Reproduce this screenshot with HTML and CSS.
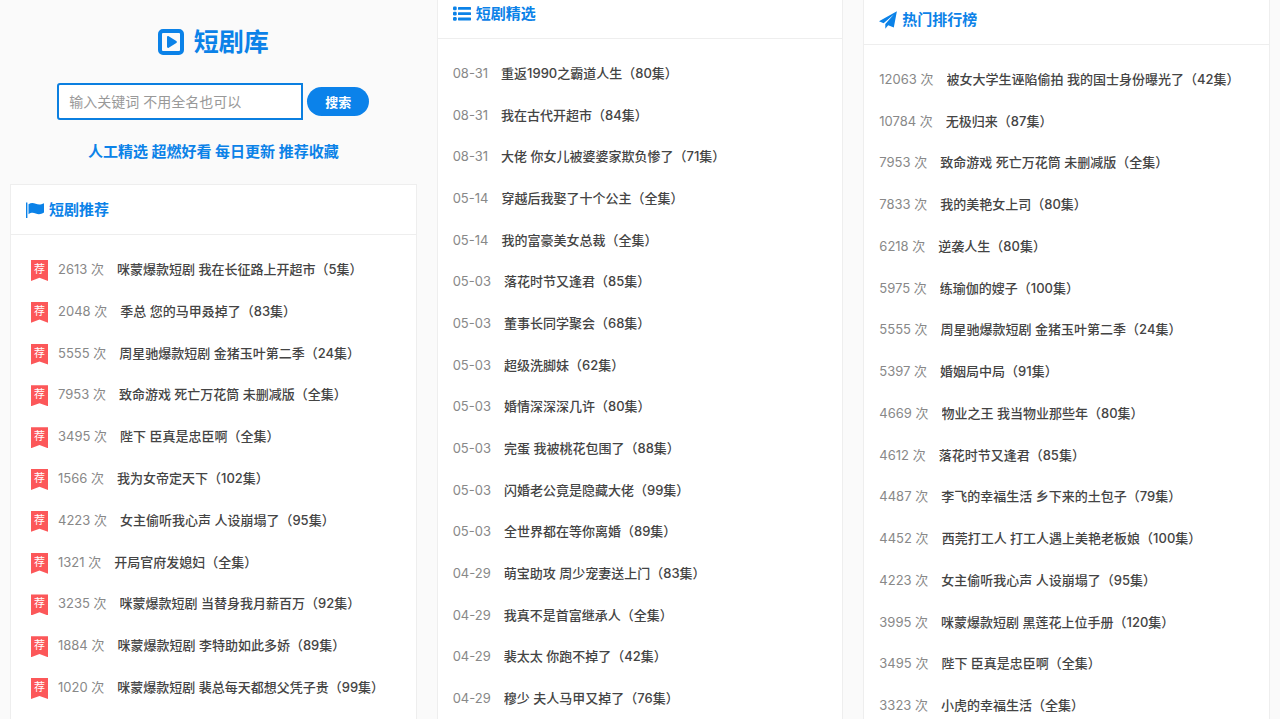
FILE: index.html
```html
<!DOCTYPE html>
<html lang="zh-CN">
<head>
<meta charset="utf-8">
<meta name="viewport" content="width=device-width, initial-scale=1">
<title>短剧库</title>
<link rel="stylesheet" href="styles.css">
</head>
<body>
<main class="columns">
  <div class="column">
    <header class="intro">
      <h1 class="brand">
        <svg class="brand-icon" viewBox="0 0 26 26" aria-hidden="true"><rect x="2" y="2" width="22" height="22" rx="3" fill="none" stroke="currentColor" stroke-width="4"/><path d="M9 8.200c0-1 .9-1.500 1.700-1l7.600 4.900c.8.500.8 1.300 0 1.800l-7.600 4.900c-.8.500-1.700 0-1.700-1z" fill="currentColor"/></svg>
        <span>短剧库</span>
      </h1>
      <form class="search">
        <input class="search-input" type="text" aria-label="搜索短剧" placeholder="输入关键词 不用全名也可以">
        <button class="search-button" type="button">搜索</button>
      </form>
      <p class="slogan">人工精选 超燃好看 每日更新 推荐收藏</p>
    </header>
    <section class="panel panel-picks">
      <h2 class="panel-title">
        <svg class="title-icon" viewBox="0 0 18 18" aria-hidden="true"><path d="M0 1.500h1.400V17H0zM2.500 3.200c2.500-1.700 4.700-1.500 7.200-.5 2.600 1 5 1.100 8.300-.5v9.300c-3 1.900-5.500 2-8.300 1-2.600-.9-4.700-1-7.200.8z" fill="currentColor"/></svg>
        <span>短剧推荐</span>
      </h2>
      <ul class="list">
        <li class="row"><span class="badge">荐</span><span class="meta">2613 次</span><a class="name" href="#">咪蒙爆款短剧 我在长征路上开超市（5集）</a></li>
        <li class="row"><span class="badge">荐</span><span class="meta">2048 次</span><a class="name" href="#">季总 您的马甲叒掉了（83集）</a></li>
        <li class="row"><span class="badge">荐</span><span class="meta">5555 次</span><a class="name" href="#">周星驰爆款短剧 金猪玉叶第二季（24集）</a></li>
        <li class="row"><span class="badge">荐</span><span class="meta">7953 次</span><a class="name" href="#">致命游戏 死亡万花筒 未删减版（全集）</a></li>
        <li class="row"><span class="badge">荐</span><span class="meta">3495 次</span><a class="name" href="#">陛下 臣真是忠臣啊（全集）</a></li>
        <li class="row"><span class="badge">荐</span><span class="meta">1566 次</span><a class="name" href="#">我为女帝定天下（102集）</a></li>
        <li class="row"><span class="badge">荐</span><span class="meta">4223 次</span><a class="name" href="#">女主偷听我心声 人设崩塌了（95集）</a></li>
        <li class="row"><span class="badge">荐</span><span class="meta">1321 次</span><a class="name" href="#">开局官府发媳妇（全集）</a></li>
        <li class="row"><span class="badge">荐</span><span class="meta">3235 次</span><a class="name" href="#">咪蒙爆款短剧 当替身我月薪百万（92集）</a></li>
        <li class="row"><span class="badge">荐</span><span class="meta">1884 次</span><a class="name" href="#">咪蒙爆款短剧 李特助如此多娇（89集）</a></li>
        <li class="row"><span class="badge">荐</span><span class="meta">1020 次</span><a class="name" href="#">咪蒙爆款短剧 裴总每天都想父凭子贵（99集）</a></li>
      </ul>
    </section>
  </div>

  <div class="column column-latest">
    <section class="panel">
      <h2 class="panel-title">
        <svg class="title-icon" viewBox="0 0 18 18" aria-hidden="true"><g fill="currentColor"><rect x="0" y="1.500" width="3.700" height="3.700" rx="1.200"/><rect x="0" y="6.800" width="3.700" height="3.700" rx="1.200"/><rect x="0" y="12.100" width="3.700" height="3.700" rx="1.200"/><rect x="5" y="2" width="13" height="2.800" rx=".6"/><rect x="5" y="7.300" width="13" height="2.800" rx=".6"/><rect x="5" y="12.600" width="13" height="2.800" rx=".6"/></g></svg>
        <span>短剧精选</span>
      </h2>
      <ul class="list">
        <li class="row"><time class="meta">08-31</time><a class="name" href="#">重返1990之霸道人生（80集）</a></li>
        <li class="row"><time class="meta">08-31</time><a class="name" href="#">我在古代开超市（84集）</a></li>
        <li class="row"><time class="meta">08-31</time><a class="name" href="#">大佬 你女儿被婆婆家欺负惨了（71集）</a></li>
        <li class="row"><time class="meta">05-14</time><a class="name" href="#">穿越后我娶了十个公主（全集）</a></li>
        <li class="row"><time class="meta">05-14</time><a class="name" href="#">我的富豪美女总裁（全集）</a></li>
        <li class="row"><time class="meta">05-03</time><a class="name" href="#">落花时节又逢君（85集）</a></li>
        <li class="row"><time class="meta">05-03</time><a class="name" href="#">董事长同学聚会（68集）</a></li>
        <li class="row"><time class="meta">05-03</time><a class="name" href="#">超级洗脚妹（62集）</a></li>
        <li class="row"><time class="meta">05-03</time><a class="name" href="#">婚情深深深几许（80集）</a></li>
        <li class="row"><time class="meta">05-03</time><a class="name" href="#">完蛋 我被桃花包围了（88集）</a></li>
        <li class="row"><time class="meta">05-03</time><a class="name" href="#">闪婚老公竟是隐藏大佬（99集）</a></li>
        <li class="row"><time class="meta">05-03</time><a class="name" href="#">全世界都在等你离婚（89集）</a></li>
        <li class="row"><time class="meta">04-29</time><a class="name" href="#">萌宝助攻 周少宠妻送上门（83集）</a></li>
        <li class="row"><time class="meta">04-29</time><a class="name" href="#">我真不是首富继承人（全集）</a></li>
        <li class="row"><time class="meta">04-29</time><a class="name" href="#">裴太太 你跑不掉了（42集）</a></li>
        <li class="row"><time class="meta">04-29</time><a class="name" href="#">穆少 夫人马甲又掉了（76集）</a></li>
      </ul>
    </section>
  </div>

  <div class="column column-ranking">
    <section class="panel">
      <h2 class="panel-title">
        <svg class="title-icon" viewBox="0 0 18 18" aria-hidden="true"><path d="M17.900.3 0 10.200l4.600 2L14.800 3.600 6.300 13v4.800l2.900-3.600 5.600 2.300z" fill="currentColor"/></svg>
        <span>热门排行榜</span>
      </h2>
      <ul class="list">
        <li class="row"><span class="meta">12063 次</span><a class="name" href="#">被女大学生诬陷偷拍 我的国士身份曝光了（42集）</a></li>
        <li class="row"><span class="meta">10784 次</span><a class="name" href="#">无极归来（87集）</a></li>
        <li class="row"><span class="meta">7953 次</span><a class="name" href="#">致命游戏 死亡万花筒 未删减版（全集）</a></li>
        <li class="row"><span class="meta">7833 次</span><a class="name" href="#">我的美艳女上司（80集）</a></li>
        <li class="row"><span class="meta">6218 次</span><a class="name" href="#">逆袭人生（80集）</a></li>
        <li class="row"><span class="meta">5975 次</span><a class="name" href="#">练瑜伽的嫂子（100集）</a></li>
        <li class="row"><span class="meta">5555 次</span><a class="name" href="#">周星驰爆款短剧 金猪玉叶第二季（24集）</a></li>
        <li class="row"><span class="meta">5397 次</span><a class="name" href="#">婚姻局中局（91集）</a></li>
        <li class="row"><span class="meta">4669 次</span><a class="name" href="#">物业之王 我当物业那些年（80集）</a></li>
        <li class="row"><span class="meta">4612 次</span><a class="name" href="#">落花时节又逢君（85集）</a></li>
        <li class="row"><span class="meta">4487 次</span><a class="name" href="#">李飞的幸福生活 乡下来的土包子（79集）</a></li>
        <li class="row"><span class="meta">4452 次</span><a class="name" href="#">西莞打工人 打工人遇上美艳老板娘（100集）</a></li>
        <li class="row"><span class="meta">4223 次</span><a class="name" href="#">女主偷听我心声 人设崩塌了（95集）</a></li>
        <li class="row"><span class="meta">3995 次</span><a class="name" href="#">咪蒙爆款短剧 黑莲花上位手册（120集）</a></li>
        <li class="row"><span class="meta">3495 次</span><a class="name" href="#">陛下 臣真是忠臣啊（全集）</a></li>
        <li class="row"><span class="meta">3323 次</span><a class="name" href="#">小虎的幸福生活（全集）</a></li>
      </ul>
    </section>
  </div>
</main>
</body>
</html>
```
FILE: styles.css
```css
* {
  box-sizing: border-box;
}

body {
  margin: 0;
  height: 100vh;
  overflow: hidden;
  background: #fafafa;
  color: #444;
  font-family: Inter, "Noto Sans CJK SC", sans-serif;
  font-size: 13px;
  line-height: 20px;
}

.columns {
  display: grid;
  grid-template-columns: repeat(3, minmax(0, 1fr));
  gap: 20px;
  height: 100vh;
  padding: 0 10px;
}

.column {
  display: flex;
  flex-direction: column;
  height: 100vh;
}

/* The second and third columns are scrolled slightly past their top edge. */
.column-latest {
  height: calc(100vh + 12px);
  margin-top: -12px;
}

.column-ranking {
  height: calc(100vh + 13px);
  margin-top: -6px;
}

.intro {
  display: flex;
  flex-direction: column;
  align-items: center;
  padding: 24px 0 20px;
  color: #0b82e8;
}

.brand {
  display: flex;
  align-items: center;
  gap: 10px;
  margin: 0;
  font-size: 25px;
  line-height: 36px;
  font-weight: 700;
}

.brand-icon {
  width: 26px;
  height: 26px;
}

.search {
  display: flex;
  align-items: center;
  gap: 4px;
  width: 312px;
  max-width: 100%;
  margin: 23px 0 20px;
}

.search-input {
  flex: 1;
  min-width: 0;
  height: 37px;
  padding: 0 10px;
  border: 2px solid #0b7fe0;
  border-radius: 3px 0 0 3px;
  background: #fff;
  color: #444;
  font: inherit;
  font-size: 14px;
}

.search-input::placeholder {
  color: #999;
}

.search-button {
  height: 29px;
  padding: 0 18px;
  border: 0;
  border-radius: 15px;
  background: #0b82ea;
  color: #fff;
  font: inherit;
  font-weight: 700;
}

.slogan {
  margin: 0;
  font-size: 15px;
  line-height: 24px;
  font-weight: 700;
}

.panel {
  display: flex;
  flex: 1;
  flex-direction: column;
  border: 1px solid #eee;
  border-bottom: 0;
  background: #fff;
}

.panel-picks {
  padding-bottom: 11px;
}

.panel-title {
  display: flex;
  align-items: center;
  gap: 5px;
  height: 50px;
  margin: 0 0 13px;
  padding: 0 15px;
  border-bottom: 1px solid #eee;
  color: #0b82e8;
  font-size: 15px;
  font-weight: 700;
}

.title-icon {
  width: 18px;
  height: 18px;
}

.list {
  display: grid;
  flex: 1;
  grid-auto-rows: minmax(32px, 1fr);
  margin: 0;
  padding: 0 15px;
  list-style: none;
}

.panel-picks .list {
  padding: 0 20px;
}

.row {
  display: flex;
  align-items: center;
  white-space: nowrap;
}

.badge {
  width: 17px;
  height: 21px;
  margin: 3px 10px 0 0;
  background: #fc5759;
  clip-path: polygon(0 0, 100% 0, 100% 100%, 50% 85%, 0 100%);
  color: #fff;
  font-size: 11px;
  line-height: 18px;
  text-align: center;
}

.meta {
  margin-right: 13px;
  color: #888;
}

.name {
  overflow: hidden;
  color: #444;
  font-weight: 500;
  text-decoration: none;
  text-overflow: ellipsis;
}
```
